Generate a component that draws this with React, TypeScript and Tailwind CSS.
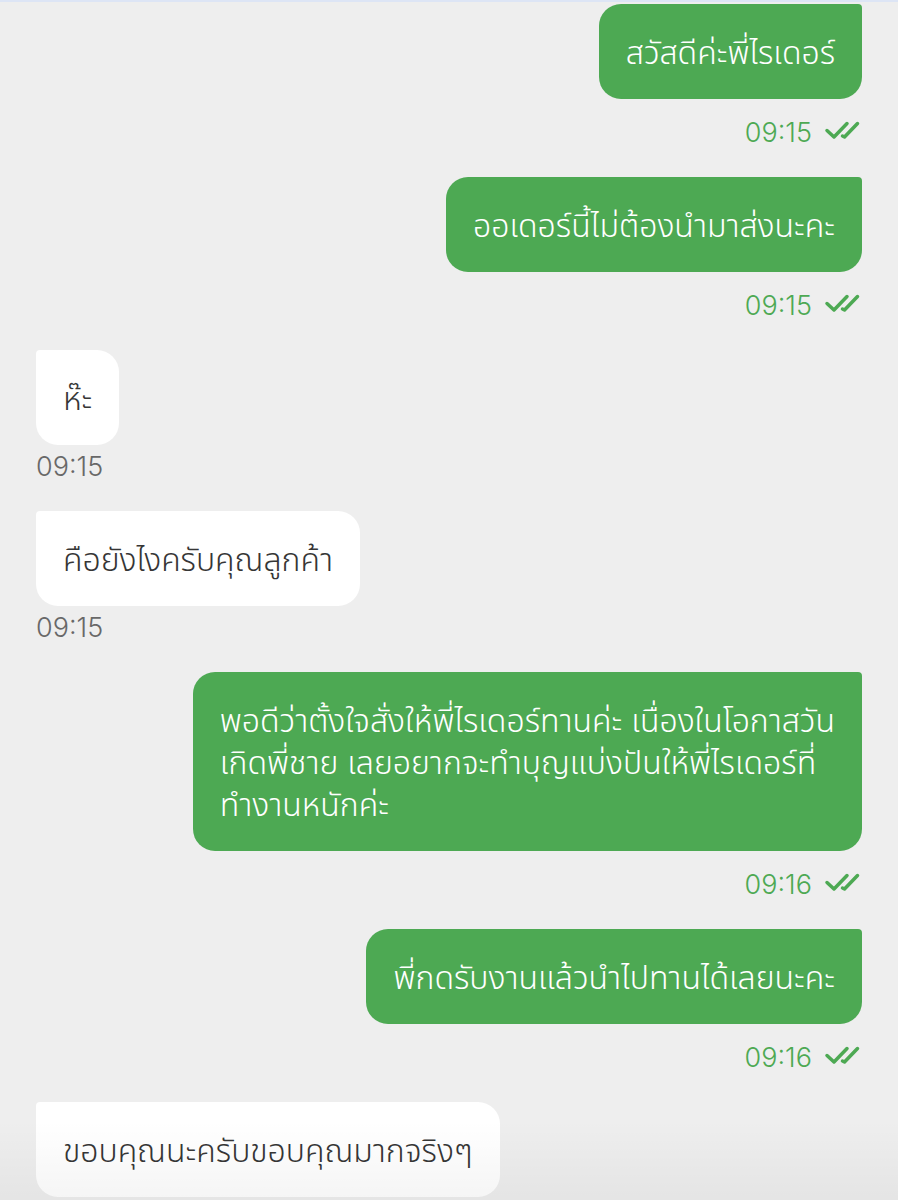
type Message = {
  from: 'me' | 'rider';
  lines: string[];
  time?: string;
};

const messages: Message[] = [
  { from: 'me', lines: ['สวัสดีค่ะพี่ไรเดอร์'], time: '09:15' },
  { from: 'me', lines: ['ออเดอร์นี้ไม่ต้องนำมาส่งนะคะ'], time: '09:15' },
  { from: 'rider', lines: ['ห๊ะ'], time: '09:15' },
  { from: 'rider', lines: ['คือยังไงครับคุณลูกค้า'], time: '09:15' },
  {
    from: 'me',
    lines: [
      'พอดีว่าตั้งใจสั่งให้พี่ไรเดอร์ทานค่ะ เนื่องในโอกาสวัน',
      'เกิดพี่ชาย เลยอยากจะทำบุญแบ่งปันให้พี่ไรเดอร์ที่',
      'ทำงานหนักค่ะ',
    ],
    time: '09:16',
  },
  { from: 'me', lines: ['พี่กดรับงานแล้วนำไปทานได้เลยนะคะ'], time: '09:16' },
  { from: 'rider', lines: ['ขอบคุณนะครับขอบคุณมากจริงๆ'] },
];

function DoubleCheck() {
  return (
    <svg
      className="h-5 w-9"
      viewBox="0 0 36 20"
      fill="none"
      stroke="currentColor"
      strokeWidth="3.5"
      strokeLinecap="round"
      strokeLinejoin="round"
      role="img"
      aria-label="อ่านแล้ว"
    >
      <path d="M3 10.5l7 6.5L23 3.5" />
      <path d="M18.5 16l2 1L33.5 3.5" />
    </svg>
  );
}

function Bubble({ message }: { message: Message }) {
  const mine = message.from === 'me';
  return (
    <li className={mine ? 'flex flex-col items-end' : 'flex flex-col items-start'}>
      <p
        className={
          mine
            ? 'rounded-[22px] rounded-tr-sm bg-[#4da953] px-[27px] pt-[28px] pb-[25px] text-[32px] leading-[42px] font-light whitespace-nowrap text-white'
            : 'rounded-[22px] rounded-tl-sm bg-white px-[27px] pt-[28px] pb-[25px] text-[32px] leading-[42px] font-light whitespace-nowrap text-[#363636]'
        }
      >
        {message.lines.map((line) => (
          <span key={line} className="block">
            {line}
          </span>
        ))}
      </p>
      {message.time && mine && (
        <div className="flex h-[78px] items-start gap-3 pt-4 text-[#4da953]">
          <time className="text-[27px] leading-[36px] font-light">{message.time}</time>
          <span className="flex h-[30px] items-center pr-0.5">
            <DoubleCheck />
          </span>
        </div>
      )}
      {message.time && !mine && (
        <div className="h-[66px] pt-1 text-[#686868]">
          <time className="block text-[27px] leading-[36px] font-light">{message.time}</time>
        </div>
      )}
    </li>
  );
}

export default function App() {
  return (
    <main className="relative h-screen overflow-hidden border-t-2 border-[#dde5f5] bg-[#eeeeee] font-['Inter','Noto_Sans_Thai','Noto_Sans',sans-serif]">
      <ul className="flex flex-col px-9 pt-0.5">
        {messages.map((message, index) => (
          <Bubble key={index} message={message} />
        ))}
      </ul>
      <div className="pointer-events-none absolute inset-x-0 bottom-0 h-20 bg-linear-to-b from-transparent to-black/4" />
    </main>
  );
}
